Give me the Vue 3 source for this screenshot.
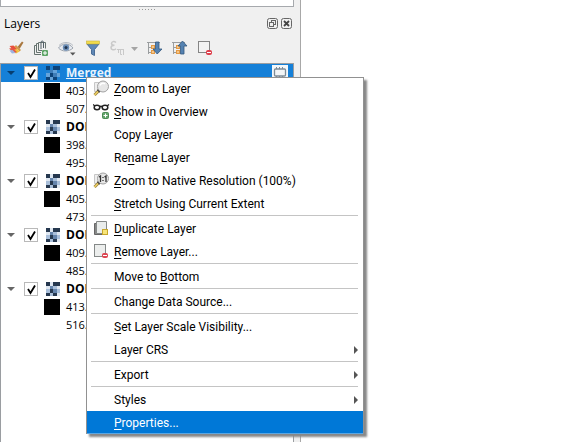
<script setup>
import { ref } from 'vue'

const layers = ref([
  { name: 'Merged', high: '403.', low: '507.', visible: true, selected: true },
  { name: 'DOP', high: '398.', low: '495.', visible: true },
  { name: 'DOP', high: '405.', low: '473.', visible: true },
  { name: 'DOP', high: '409.', low: '485.', visible: true },
  { name: 'DOP', high: '413.', low: '516.', visible: true },
])

// Each label is split as [before, access key, after]
const groups = [
  [
    { label: ['', 'Z', 'oom to Layer'], icon: 'zoom' },
    { label: ['', 'S', 'how in Overview'], icon: 'overview' },
    { label: ['Copy Layer', '', ''] },
    { label: ['Re', 'n', 'ame Layer'] },
    { label: ['', 'Z', 'oom to Native Resolution (100%)'], icon: 'native' },
    { label: ['', 'S', 'tretch Using Current Extent'] },
  ],
  [
    { label: ['', 'D', 'uplicate Layer'], icon: 'duplicate' },
    { label: ['', 'R', 'emove Layer...'], icon: 'remove' },
  ],
  [{ label: ['Move to ', 'B', 'ottom'] }],
  [{ label: ['Change Data Source...', '', ''] }],
  [
    { label: ['', 'S', 'et Layer Scale Visibility...'] },
    { label: ['Layer CRS', '', ''], submenu: true },
  ],
  [{ label: ['Export', '', ''], submenu: true }],
  [
    { label: ['Styles', '', ''], submenu: true },
    { label: ['', 'P', 'roperties...'], active: true },
  ],
]

// Raster icon: 4 x 4 mosaic of palette indexes
const palette = ['#26384f', '#6484ac', '#a9bfda', '#dfe7f1']
const paletteSelected = ['#0d4379', '#3f7db8', '#65a3da', '#1f80d0']
const mosaic = [
  [0, 3, 0, 0],
  [3, 1, 2, 3],
  [2, 0, 1, 2],
  [0, 2, 0, 3],
]
</script>

<template>
  <main class="window">
    <aside class="dock">
      <div class="upper-panel"></div>
      <div class="grip"><i v-for="n in 6" :key="n"></i></div>

      <header class="title">
        <h1>Layers</h1>
        <button type="button" class="title-button" aria-label="Float panel">
          <svg width="11" height="11" viewBox="0 0 11 11" fill="none" stroke="#666">
            <rect x=".5" y=".5" width="10" height="10" rx="2" />
            <rect x="4.5" y="2.5" width="4" height="4" />
            <rect x="2.5" y="4.5" width="4" height="4" fill="#f0f0f0" />
          </svg>
        </button>
        <button type="button" class="title-button" aria-label="Close panel">
          <svg width="11" height="11" viewBox="0 0 11 11" fill="none" stroke="#666">
            <rect x=".5" y=".5" width="10" height="10" rx="2" />
            <path d="M3 3l5 5M8 3l-5 5" stroke="#444" stroke-width="1.8" />
          </svg>
        </button>
      </header>

      <div class="toolbar">
        <button type="button" class="tool" aria-label="Open layer styling">
          <svg width="16" height="16" viewBox="0 0 16 16">
            <path d="M9.500 7L14 1.500l1.500 1L11.500 9z" fill="#a9783f" />
            <path d="M8 5l5 5-1.500 1.500L6.500 6.500z" fill="#d39b4a" />
            <path d="M6.500 6.500l5 5-3.500 2L2 9z" fill="#f2c53a" />
            <path d="M1.500 6l4-.5 3.500 3.500-4 1z" fill="#e8503c" />
            <path d="M1 8.500l3.500-.5 4.500 4-3 1z" fill="#e2574a" />
            <path d="M1.500 10.500l3-.5 3 3-3.500.5z" fill="#9db3e0" />
          </svg>
        </button>
        <button type="button" class="tool" aria-label="Add group">
          <svg width="16" height="16" viewBox="0 0 16 16" fill="none" stroke="#66736f">
            <path d="M8 14.500H1.500v-9h2M8 12.500H3.500v-9h2M9 10.500H5.500v-8h7v6" />
            <path d="M8 9V2a1.300 1.300 0 0 1 2.500 0V8" stroke="#536069" />
            <rect x="9" y="10" width="6" height="6" rx="1" fill="#5da466" stroke="none" />
            <path d="M12 11v4M10 13h4" stroke="#fff" />
          </svg>
        </button>
        <button type="button" class="tool wide" aria-label="Manage map themes">
          <svg width="18" height="16" viewBox="0 0 18 16" fill="none">
            <path d="M.5 8C4 3 11 2.500 15 8 11 12 4 12 .5 8z" fill="#e6eaf0" stroke="#9ca4ae" />
            <path d="M1 5.500C5 1.500 11 1.500 15 5.500" stroke="#b4bac2" />
            <circle cx="8" cy="7.500" r="3.200" fill="#6b8db6" />
            <circle cx="8" cy="7.500" r="1.500" fill="#20354e" />
            <path d="M12 12.500h5.500l-2.750 3z" fill="#555" />
          </svg>
        </button>
        <button type="button" class="tool" aria-label="Filter legend">
          <svg width="16" height="16" viewBox="0 0 16 16">
            <path d="M2 4h12L9.500 9.500v6l-3-1.500V9.500z" fill="#5f88b6" stroke="#4a6d96" />
            <rect x="1.500" y="1" width="13" height="3" fill="#f2dc4b" stroke="#c9b33c" stroke-width=".6" />
          </svg>
        </button>
        <button type="button" class="tool expression" aria-label="Filter by expression" disabled>
          <svg width="28" height="16" viewBox="0 0 28 16" fill="none" stroke="#c9c9c9">
            <path d="M6 2.500C4 .8 1.500 1.500 1.500 3.500c0 1.300 1 1.700 3 1.700C2.500 5.200 1 6 1 7.800c0 2.200 3 2.700 5 1" stroke-width="1.500" />
            <path d="M7 9.500h7M8.500 10v3M13.500 9.500v5.500M10.500 10v4.500h1.500" />
            <path d="M21 7h7l-3.500 4z" fill="#a5a5a5" stroke="none" />
          </svg>
        </button>
        <button type="button" class="tool" aria-label="Expand all">
          <svg width="16" height="16" viewBox="0 0 16 16" fill="none">
            <path d="M1.500 2v12M0 2.500h13M2 7.500h2M2 12.500h2" stroke="#9a9d9f" />
            <rect x="4.500" y="5.500" width="3" height="3" fill="#f5c68a" stroke="#e39a45" />
            <rect x="4.500" y="10.500" width="3" height="3" fill="#f5c68a" stroke="#e39a45" />
            <path d="M8.500 2h3.500v7h3l-4.800 5L6 9h2.500z" fill="#5582b1" stroke="#34587f" stroke-width=".8" />
          </svg>
        </button>
        <button type="button" class="tool" aria-label="Collapse all">
          <svg width="16" height="16" viewBox="0 0 16 16" fill="none">
            <path d="M1.500 2v12M0 2.500h13M2 7.500h2M2 12.500h2" stroke="#9a9d9f" />
            <rect x="4.500" y="5.500" width="3" height="3" fill="#f5c68a" stroke="#e39a45" />
            <rect x="4.500" y="10.500" width="3" height="3" fill="#f5c68a" stroke="#e39a45" />
            <path d="M8.500 14V6H6l4.500-5L15 6h-3v8z" fill="#5582b1" stroke="#34587f" stroke-width=".8" />
          </svg>
        </button>
        <button type="button" class="tool" aria-label="Remove layer">
          <svg width="16" height="16" viewBox="0 0 16 16">
            <rect x="1.500" y="1.500" width="11" height="11" fill="#f3f3f3" stroke="#858585" />
            <rect x="9" y="10" width="6" height="5" rx="2" fill="#dd3e4b" />
            <path d="M10 12.500h4" stroke="#fff" />
          </svg>
        </button>
      </div>

      <section class="tree" aria-label="Layers">
        <article v-for="(layer, i) in layers" :key="i">
          <div class="layer" :class="{ selected: layer.selected }">
            <button type="button" class="expander" aria-label="Collapse layer"></button>
            <label class="check">
              <input v-model="layer.visible" type="checkbox" :aria-label="layer.name" />
              <svg v-if="layer.visible" width="11" height="11" viewBox="0 0 11 11">
                <path d="M2 5l2.500 4L9 1.500" fill="none" stroke="#000" stroke-width="1.800" />
              </svg>
            </label>
            <svg class="raster" width="14" height="14" viewBox="0 0 14 14" shape-rendering="crispEdges">
              <template v-for="(cells, y) in mosaic" :key="y">
                <rect
                  v-for="(cell, x) in cells" :key="x"
                  :x="x * 3.5" :y="y * 3.5" width="3.5" height="3.5"
                  :fill="(layer.selected ? paletteSelected : palette)[cell]"
                />
              </template>
            </svg>
            <span class="name">{{ layer.name }}</span>
            <span v-if="layer.selected" class="memory">
              <svg width="16" height="14" viewBox="0 0 16 14" fill="none" stroke="#7d8b97">
                <path d="M4.500 1v2M7.500 1v2M10.500 1v2M4.500 10v2M7.500 10v2M10.500 10v2" />
                <rect x="2.500" y="3" width="11" height="7" rx="1" fill="#f3f5f6" stroke-width="1.300" />
              </svg>
            </span>
          </div>
          <div class="legend">
            <span class="swatch"></span><span>{{ layer.high }}</span>
          </div>
          <div class="legend">
            <span class="swatch empty"></span><span>{{ layer.low }}</span>
          </div>
        </article>
      </section>
    </aside>

    <nav class="menu" aria-label="Layer actions">
      <div v-for="(group, g) in groups" :key="g" class="group">
        <button
          v-for="(item, i) in group" :key="i"
          type="button" class="item" :class="{ active: item.active }"
        >
          <span class="icon">
            <svg v-if="item.icon === 'zoom' || item.icon === 'native'" width="17" height="17" viewBox="0 0 17 17" fill="none">
              <path d="M1.500 2.500h6v9h-6z" fill="#eee" stroke="#c6c6c6" />
              <path d="M6 10.500l-4.500 4.500" stroke="#9a8244" stroke-width="3" />
              <path d="M6 10.500l-4.500 4.500" stroke="#efd263" stroke-width="1.500" />
              <path d="M4.500 9.500l2.500 2.500" stroke="#444" stroke-width="1.800" />
              <circle cx="10" cy="6.500" r="5.500" fill="#e6e6e6" stroke="#a2a2a2" />
              <path v-if="item.icon === 'zoom'" d="M7 5.500c.5-2 3-3 5-1.500" stroke="#fff" stroke-width="1.500" />
              <path v-else d="M6 5l1.500-1v6M11.500 5L13 4v6M10 5v1M10 8v1" stroke="#333" stroke-width="1.300" />
            </svg>
            <svg v-else-if="item.icon === 'overview'" width="17" height="17" viewBox="0 0 17 17" fill="none">
              <path d="M0 1.500l2 1.500M16 1.500L14 3M6.500 4q1.500-1.500 3 0" stroke="#222" stroke-width="1.300" />
              <ellipse cx="4" cy="4.500" rx="2.800" ry="2.200" stroke="#222" stroke-width="1.500" />
              <ellipse cx="12" cy="4.500" rx="2.800" ry="2.200" stroke="#222" stroke-width="1.500" />
              <rect x="9.500" y="9.500" width="6" height="6" rx="1" fill="#63a46b" stroke="#4b8a54" />
              <path d="M12.500 10.500v4M10.500 12.500h4" stroke="#fff" />
            </svg>
            <svg v-else-if="item.icon === 'duplicate'" width="17" height="17" viewBox="0 0 17 17">
              <path d="M1.500 3.500h9v11h-9z" fill="#888" stroke="#666" />
              <path d="M3.500 1.500h10v12h-10z" fill="#e9eceb" stroke="#858988" />
              <rect x="9.500" y="9.500" width="5" height="5" fill="#f7e57a" stroke="#c8a72c" />
            </svg>
            <svg v-else-if="item.icon === 'remove'" width="17" height="17" viewBox="0 0 17 17">
              <rect x="1.500" y="1.500" width="11" height="12" fill="#eceeed" stroke="#858988" />
              <rect x="9" y="10" width="6" height="5" rx="2" fill="#dd4552" />
              <path d="M10 12.500h4" stroke="#fff" />
            </svg>
          </span>
          <span class="label">{{ item.label[0] }}<u>{{ item.label[1] }}</u>{{ item.label[2] }}</span>
          <svg v-if="item.submenu" class="arrow" width="4" height="8" viewBox="0 0 4 8">
            <path d="M0 0l4 4-4 4z" fill="#555" />
          </svg>
        </button>
      </div>
    </nav>
  </main>
</template>

<style>
body {
  background: #fff;
}
</style>

<style scoped>
* {
  box-sizing: border-box;
}
.window {
  position: relative;
  display: flex;
  min-height: 100vh;
  overflow: hidden;
  font-family: "Open Sans", "Noto Sans", sans-serif;
  font-size: 12px;
  color: #000;
}
button {
  display: flex;
  align-items: center;
  border: 0;
  padding: 0;
  background: none;
  font: inherit;
  color: inherit;
}
svg {
  display: block;
  flex: none;
}
.dock {
  display: flex;
  flex-direction: column;
  width: 301px;
  padding-right: 6px;
  border-right: 1px solid #a8a8a8;
  background: #f0f0f0;
}
.upper-panel {
  height: 7px;
  border: 1px solid #a6a9ad;
  border-top: 0;
  background: #fff;
}
.grip {
  display: flex;
  justify-content: center;
  gap: 2px;
  padding: 2px 0;
}
.grip i {
  width: 1px;
  height: 1px;
  background: #999;
}
.title {
  display: flex;
  align-items: center;
  gap: 3px;
  height: 22px;
  padding: 0 2px 0 4px;
}
.title h1 {
  flex: 1;
  margin: 0;
  font-size: 12px;
  font-weight: 400;
}
.toolbar {
  display: flex;
  align-items: center;
  gap: 9px;
  height: 29px;
  padding: 0 8px 2px;
}
.tool.wide {
  width: 18px;
}
.tool.expression {
  width: 28px;
}
.tree {
  flex: 1;
  border: 1px solid #9a9da1;
  border-bottom: 0;
  background: #fff;
}
.layer,
.legend {
  display: flex;
  align-items: center;
  height: 18px;
  line-height: 18px;
}
.layer {
  padding-left: 6px;
  font-weight: 700;
}
.layer.selected {
  background: #1580d8;
  color: #e8f3fc;
}
.selected .name {
  text-decoration: underline;
}
.expander {
  width: 8px;
  height: 4px;
  margin-right: 9px;
  background: #666;
  clip-path: polygon(0 0, 100% 0, 50% 100%);
}
.selected .expander {
  background: #073e70;
}
.check {
  display: grid;
  place-items: center;
  width: 14px;
  height: 14px;
  margin-right: 8px;
  border: 1px solid #b9b9b9;
  background: #fff;
}
.check input {
  grid-area: 1 / 1;
  width: 12px;
  height: 12px;
  margin: 0;
  appearance: none;
}
.check svg {
  grid-area: 1 / 1;
  pointer-events: none;
}
.raster {
  margin-right: 6px;
}
.memory {
  display: grid;
  place-items: center;
  width: 16px;
  height: 16px;
  margin: 0 5px 0 auto;
  background: #f3f7fa;
}
.legend {
  gap: 6px;
  padding-left: 43px;
  font-size: 11px;
}
.swatch {
  width: 16px;
  height: 16px;
  background: #000;
}
.swatch.empty {
  background: none;
}
.menu {
  position: absolute;
  top: 77px;
  left: 86px;
  width: 278px;
  border: 1px solid #919191;
  border-width: 0 1px;
  background: #fff;
  box-shadow: inset 0 1px #919191, 3px 3px 2px #888;
  font-family: Roboto, "Open Sans", sans-serif;
}
.group + .group::before {
  content: "";
  display: block;
  height: 2px;
  margin: 0 5px 0 4px;
  background: linear-gradient(#c4c4c4 1px, #fff 1px);
}
.item {
  width: 100%;
  height: 23px;
  padding: 0 5px 0 6px;
  text-align: left;
  white-space: nowrap;
}
.item.active {
  background: #0078d7;
  color: #fff;
  box-shadow: inset 0 -1px #5ba7e3;
}
.icon {
  width: 17px;
  margin-right: 4px;
}
.label {
  flex: 1;
}
.label u {
  text-underline-offset: 2px;
}
</style>
